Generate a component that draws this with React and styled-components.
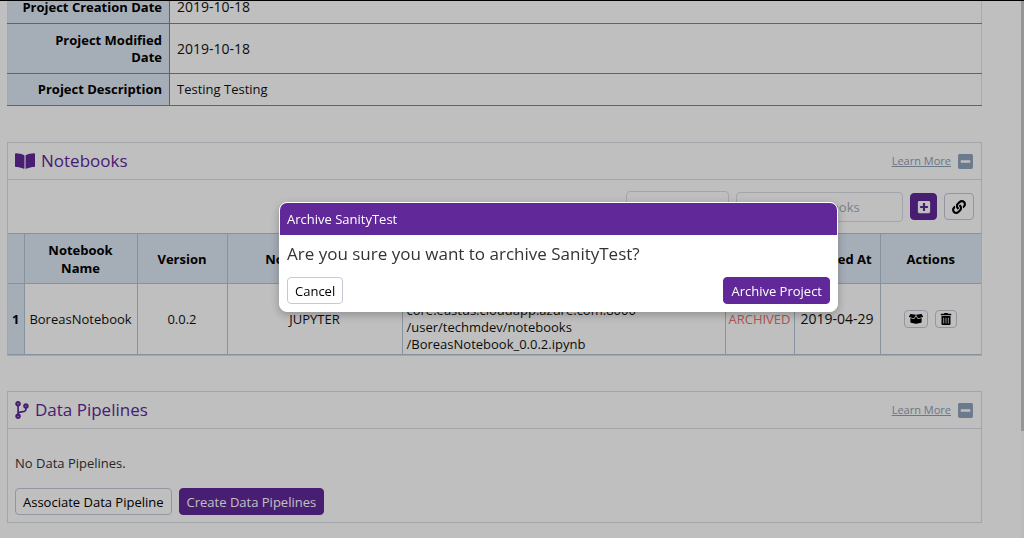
import React from "react";
import styled, { createGlobalStyle, css } from "styled-components";
import {
  FaBookOpen,
  FaBoxOpen,
  FaCodeBranch,
  FaLink,
  FaMinusSquare,
  FaPlusSquare,
  FaTrashAlt,
} from "react-icons/fa";

const GlobalStyle = createGlobalStyle`
  *, *::before, *::after { box-sizing: border-box; }
  body {
    margin: 0;
    background: #fff;
    color: #111;
    font-family: "Open Sans", "Noto Sans", sans-serif;
    font-size: 13px;
    line-height: 18px;
  }
  button, input, select { font: inherit; }
`;

const Page = styled.div`
  position: relative;
  display: flex;
  height: 100vh;
  overflow: hidden;
  border-top: 1px solid #000;
`;

const Main = styled.main`
  flex: 1;
  min-width: 0;
  padding: 0 39px 0 7px;
`;

const ScrollTrack = styled.div`
  width: 3px;
  background: #fafafa;
`;

const ScrollThumb = styled.div`
  height: 80%;
  background: #c8c8c8;
`;

const DetailsTable = styled.table`
  width: 100%;
  margin-top: -11px;
  margin-bottom: 36px;
  border-collapse: collapse;
  table-layout: fixed;
  border: 1px solid #dde3ea;
  border-bottom-color: #77879c;
  line-height: 17px;

  tr { border-bottom: 1px solid #77879c; }
  td { padding: 7px; }
`;

const DetailLabel = styled.th`
  width: 162px;
  padding: 7px;
  background: #dde7f3;
  border-right: 1px solid #77879c;
  text-align: right;
  color: #000;
`;

const TallRow = styled.tr`
  height: 50px;
`;

const DateText = styled.time`
  font-size: 14px;
`;

const Panel = styled.section`
  margin-bottom: 35px;
  border: 1px solid #d9dee3;
`;

const PanelHeader = styled.header`
  display: flex;
  align-items: center;
  gap: 6px;
  height: 37px;
  padding: 0 7px;
  border-bottom: 1px solid #d9dee3;
  color: #612899;
`;

const PanelTitle = styled.h2`
  flex: 1;
  margin: 0;
  font-size: 17px;
  font-weight: 400;
  line-height: 24px;
`;

const BranchIcon = styled(FaCodeBranch)`
  width: 14px;
  height: 18px;
`;

const LearnMore = styled.a`
  color: #8fa0b5;
  font-size: 11px;
`;

const CollapseButton = styled.button`
  display: flex;
  padding: 0;
  border: 0;
  background: none;
  color: #8fa3bb;
  font-size: 17px;
`;

const Toolbar = styled.div`
  display: flex;
  align-items: center;
  justify-content: flex-end;
  gap: 7px;
  height: 53px;
  padding: 0 7px;
`;

const fieldBox = css`
  border: 1px solid #d9dee3;
  border-radius: 4px;
  background: #fff;
`;

const FilterSelect = styled.select`
  ${fieldBox}
  width: 103px;
  height: 32px;
`;

const SearchInput = styled.input`
  ${fieldBox}
  width: 167px;
  height: 30px;
  padding: 0 12px;
  &::placeholder { color: #a4adb8; opacity: 1; }
`;

const Button = styled.button`
  display: inline-flex;
  align-items: center;
  justify-content: center;
  height: 27px;
  padding: 0 7px;
  border: 1px solid ${(p) => (p.$primary ? "#612899" : "#c3c9d6")};
  border-radius: 4px;
  background: ${(p) => (p.$primary ? "#612899" : "#fff")};
  color: ${(p) => (p.$primary ? "#fff" : "#000")};
  white-space: nowrap;
`;

const ToolButton = styled(Button)`
  width: ${(p) => (p.$primary ? "27px" : "30px")};
  padding: 0;
  font-size: 14px;
`;

const RowButton = styled(Button)`
  height: 18px;
  padding: 0 4px;
  font-size: 12px;
`;

const RowActions = styled.div`
  display: flex;
  justify-content: center;
  gap: 7px;
`;

const NotebookTable = styled.table`
  width: 100%;
  border-collapse: collapse;
  table-layout: fixed;
  text-align: center;

  th, td {
    padding: 0;
    border: 1px solid #b5c3d4;
  }
  th { background: #dde7f3; color: #000; }
  thead tr { height: 50px; }
  tbody tr { height: 71px; }
  tr > :first-child { border-left: 0; }
  tr > :last-child { border-right: 0; }
`;

const Col = styled.col`
  width: ${(p) => p.$w};
`;

const PathCell = styled.td`
  text-align: left;
  line-height: 17px;
  && { padding-left: 4px; }
`;

const Status = styled.td`
  color: #f0716c;
`;

const PanelBody = styled.div`
  display: flex;
  flex-direction: column;
  gap: 16px;
  padding: 25px 7px 7px;
  color: #333;
`;

const Message = styled.p`
  margin: 0;
`;

const ButtonRow = styled.div`
  display: flex;
  gap: 7px;
  justify-content: ${(p) => (p.$spread ? "space-between" : "flex-start")};
`;

const Overlay = styled.div`
  position: fixed;
  inset: 0;
  display: flex;
  align-items: center;
  justify-content: center;
  padding-left: 93px;
  padding-bottom: 24px;
  background: rgba(0, 0, 0, 0.25);
`;

const Dialog = styled.div`
  width: 559px;
  max-width: 100%;
  border: 1px solid #fff;
  border-radius: 8px;
  overflow: hidden;
  background: #fff;
  box-shadow: 0 3px 10px rgba(0, 0, 0, 0.25);
`;

const DialogTitle = styled.div`
  padding: 7px;
  background: #612899;
  color: #fff;
`;

const DialogBody = styled.div`
  display: flex;
  flex-direction: column;
  gap: 11px;
  padding: 7px;
`;

const Question = styled.p`
  margin: 0;
  color: #333;
  font-size: 17px;
  line-height: 24px;
`;

const columns = ["16px", "113px", "90px", "175px", "auto", "69px", "86px", "101px"];

function PanelHeading({ icon, title }) {
  return (
    <PanelHeader>
      {icon}
      <PanelTitle>{title}</PanelTitle>
      <LearnMore href="#learn">Learn More</LearnMore>
      <CollapseButton type="button" aria-label={`Collapse ${title}`}>
        <FaMinusSquare />
      </CollapseButton>
    </PanelHeader>
  );
}

function Details() {
  return (
    <DetailsTable>
      <tbody>
        <tr>
          <DetailLabel scope="row">Project Creation Date</DetailLabel>
          <td><DateText>2019-10-18</DateText></td>
        </tr>
        <TallRow>
          <DetailLabel scope="row">Project Modified<br />Date</DetailLabel>
          <td><DateText>2019-10-18</DateText></td>
        </TallRow>
        <tr>
          <DetailLabel scope="row">Project Description</DetailLabel>
          <td>Testing Testing</td>
        </tr>
      </tbody>
    </DetailsTable>
  );
}

function Notebooks() {
  return (
    <Panel>
      <PanelHeading icon={<FaBookOpen size={20} />} title="Notebooks" />
      <Toolbar>
        <FilterSelect aria-label="Notebook status" defaultValue="all">
          <option value="all">All</option>
        </FilterSelect>
        <SearchInput aria-label="Search notebooks" placeholder="Search Notebooks" />
        <ToolButton type="button" $primary aria-label="Add notebook">
          <FaPlusSquare />
        </ToolButton>
        <ToolButton type="button" aria-label="Link notebook">
          <FaLink />
        </ToolButton>
      </Toolbar>
      <NotebookTable>
        <colgroup>
          {columns.map((w, i) => (
            <Col key={i} $w={w} />
          ))}
        </colgroup>
        <thead>
          <tr>
            <th />
            <th>Notebook<br />Name</th>
            <th>Version</th>
            <th>Notebook Type</th>
            <th>Path</th>
            <th>Status</th>
            <th>Created At</th>
            <th>Actions</th>
          </tr>
        </thead>
        <tbody>
          <tr>
            <th scope="row">1</th>
            <td>BoreasNotebook</td>
            <td>0.0.2</td>
            <td>JUPYTER</td>
            <PathCell>
              http://boreas.
              <br />
              core.eastus.cloudapp.azure.com:8000
              <br />
              /user/techmdev/notebooks
              <br />
              /BoreasNotebook_0.0.2.ipynb
            </PathCell>
            <Status>ARCHIVED</Status>
            <td><DateText>2019-04-29</DateText></td>
            <td>
              <RowActions>
                <RowButton type="button" aria-label="Unarchive"><FaBoxOpen size={14} /></RowButton>
                <RowButton type="button" aria-label="Delete"><FaTrashAlt /></RowButton>
              </RowActions>
            </td>
          </tr>
        </tbody>
      </NotebookTable>
    </Panel>
  );
}

function Pipelines() {
  return (
    <Panel>
      <PanelHeading icon={<BranchIcon />} title="Data Pipelines" />
      <PanelBody>
        <Message>No Data Pipelines.</Message>
        <ButtonRow>
          <Button type="button">Associate Data Pipeline</Button>
          <Button type="button" $primary>Create Data Pipelines</Button>
        </ButtonRow>
      </PanelBody>
    </Panel>
  );
}

function ArchiveDialog() {
  return (
    <Overlay>
      <Dialog role="dialog" aria-modal="true" aria-labelledby="archive-title">
        <DialogTitle id="archive-title">Archive SanityTest</DialogTitle>
        <DialogBody>
          <Question>Are you sure you want to archive SanityTest?</Question>
          <ButtonRow $spread>
            <Button type="button">Cancel</Button>
            <Button type="button" $primary>Archive Project</Button>
          </ButtonRow>
        </DialogBody>
      </Dialog>
    </Overlay>
  );
}

export default function App() {
  return (
    <>
      <GlobalStyle />
      <Page>
        <Main>
          <Details />
          <Notebooks />
          <Pipelines />
        </Main>
        <ScrollTrack>
          <ScrollThumb />
        </ScrollTrack>
      </Page>
      <ArchiveDialog />
    </>
  );
}
